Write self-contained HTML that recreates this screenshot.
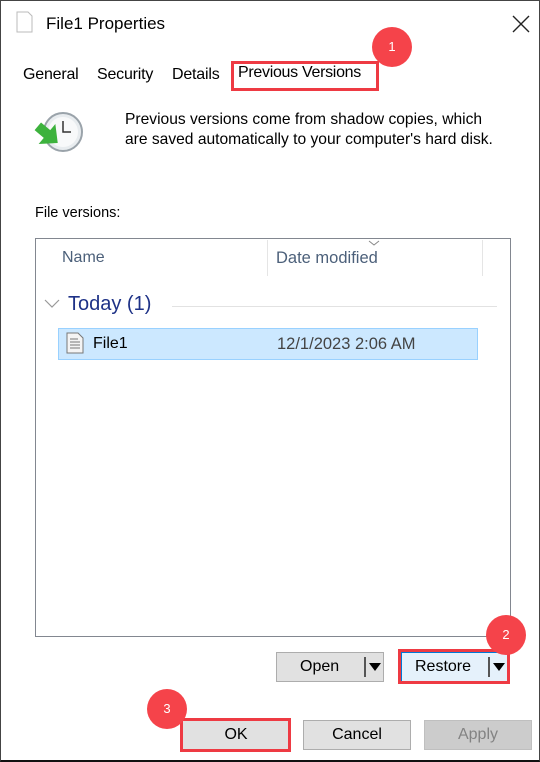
<!DOCTYPE html>
<html><head><style>
*{margin:0;padding:0;box-sizing:border-box}
body{width:540px;height:762px;background:#fff;position:relative;overflow:hidden;font-family:"Liberation Sans",sans-serif;color:#000}
.a{position:absolute;white-space:nowrap}
.frame{left:0;top:0;width:540px;height:762px;border:1px solid #444;border-bottom:2px solid #111}
.btn{position:absolute;height:30px;background:#e1e1e1;border:1px solid #adadad;font-size:16px;text-align:center;line-height:28px}
.badge{position:absolute;width:40px;height:40px;border-radius:50%;background:#f5434a;color:#fff;font-size:13px;text-align:center;line-height:40px}
.red{position:absolute;border:3px solid #ee3a43}
.tri{position:absolute;top:10px;width:0;height:0;border-left:6px solid transparent;border-right:6px solid transparent;border-top:8px solid #000}
</style></head><body>
<div class="a frame"></div>
<svg class="a" style="left:16px;top:11px" width="18" height="22"><path d="M1 1h11l4 4v16H1z" fill="#fff" stroke="#bbb"/></svg>
<div class="a" style="left:46px;top:14px;font-size:17px">File1 Properties</div>
<svg class="a" style="left:512px;top:15px" width="18" height="18"><path d="M1 1L17 17M17 1L1 17" stroke="#222" stroke-width="1.4"/></svg>

<div class="a" style="left:23px;top:66px;font-size:16px;letter-spacing:-0.2px">General</div>
<div class="a" style="left:97px;top:66px;font-size:16px;letter-spacing:-0.2px">Security</div>
<div class="a" style="left:172px;top:66px;font-size:16px;letter-spacing:-0.2px">Details</div>
<div class="a" style="left:238px;top:64px;font-size:16px;letter-spacing:-0.3px">Previous Versions</div>
<div class="red" style="left:231px;top:61px;width:148px;height:30px"></div>
<div class="badge" style="left:372px;top:27px">1</div>

<svg class="a" style="left:33px;top:112px" width="52" height="44">
<circle cx="30" cy="20" r="19" fill="#e8ecef" stroke="#9aa3aa" stroke-width="2"/>
<circle cx="30" cy="20" r="15" fill="#f8f9fa"/>
<path d="M30 9v11h8" stroke="#333" stroke-width="1.5" fill="none"/>
<path d="M2 17h12v-8l14 13-14 13v-8H2z" fill="#3db23d" transform="rotate(40 14 22)"/>
</svg>
<div class="a" style="left:125px;top:110px;font-size:15.6px;line-height:20px">Previous versions come from shadow copies, which<br>are saved automatically to your computer's hard disk.</div>

<div class="a" style="left:35px;top:205px;font-size:14.5px">File versions:</div>
<div class="a" style="left:35px;top:238px;width:476px;height:399px;border:1px solid #828790"></div>
<div class="a" style="left:267px;top:240px;width:1px;height:36px;background:#e5e5e5"></div>
<div class="a" style="left:482px;top:240px;width:1px;height:36px;background:#e5e5e5"></div>
<svg class="a" style="left:368px;top:240px" width="12" height="7"><path d="M1 1l5 4 5-4" stroke="#888" fill="none"/></svg>
<div class="a" style="left:62px;top:249px;font-size:16px;color:#4c607a">Name</div>
<div class="a" style="left:276px;top:249px;font-size:16.5px;color:#4c607a">Date modified</div>
<svg class="a" style="left:44px;top:298px" width="16" height="12"><path d="M1 2l7 7 7-7" stroke="#999" fill="none" stroke-width="1.2"/></svg>
<div class="a" style="left:68px;top:293px;font-size:20px;color:#1e3287">Today (1)</div>
<div class="a" style="left:172px;top:306px;width:325px;height:1px;background:#e2e2e2"></div>
<div class="a" style="left:58px;top:328px;width:420px;height:32px;background:#cce8ff;border:1px solid #99d1ff"></div>
<svg class="a" style="left:66px;top:332px" width="18" height="22"><path d="M1 1h11l5 5v15H1z" fill="#f4f4f4" stroke="#777"/><path d="M4 7h8M4 10h10M4 13h10M4 16h10" stroke="#777"/></svg>
<div class="a" style="left:93px;top:335px;font-size:16px">File1</div>
<div class="a" style="left:277px;top:335px;font-size:16.5px;color:#444">12/1/2023 2:06 AM</div>

<div class="btn" style="left:276px;top:652px;width:108px"><span style="position:absolute;left:23px">Open</span><span style="position:absolute;left:87px;top:4px;width:2px;height:20px;background:#555"></span><span class="tri" style="left:92px"></span></div>
<div class="btn" style="left:401px;top:652px;width:107px;background:#e5f1fb;border-color:#0078d7"><span style="position:absolute;left:13px">Restore</span><span style="position:absolute;left:86px;top:4px;width:2px;height:20px;background:#555"></span><span class="tri" style="left:91px"></span></div>
<div class="red" style="left:398px;top:649px;width:112px;height:35px"></div>
<div class="badge" style="left:486px;top:615px">2</div>

<div class="btn" style="left:182px;top:720px;width:108px;border-color:#0078d7">OK</div>
<div class="red" style="left:180px;top:718px;width:111px;height:34px"></div>
<div class="badge" style="left:147px;top:689px">3</div>
<div class="btn" style="left:303px;top:720px;width:108px">Cancel</div>
<div class="btn" style="left:424px;top:720px;width:108px;background:#ccc;border-color:#bfbfbf;color:#838383">Apply</div>
</body></html>
